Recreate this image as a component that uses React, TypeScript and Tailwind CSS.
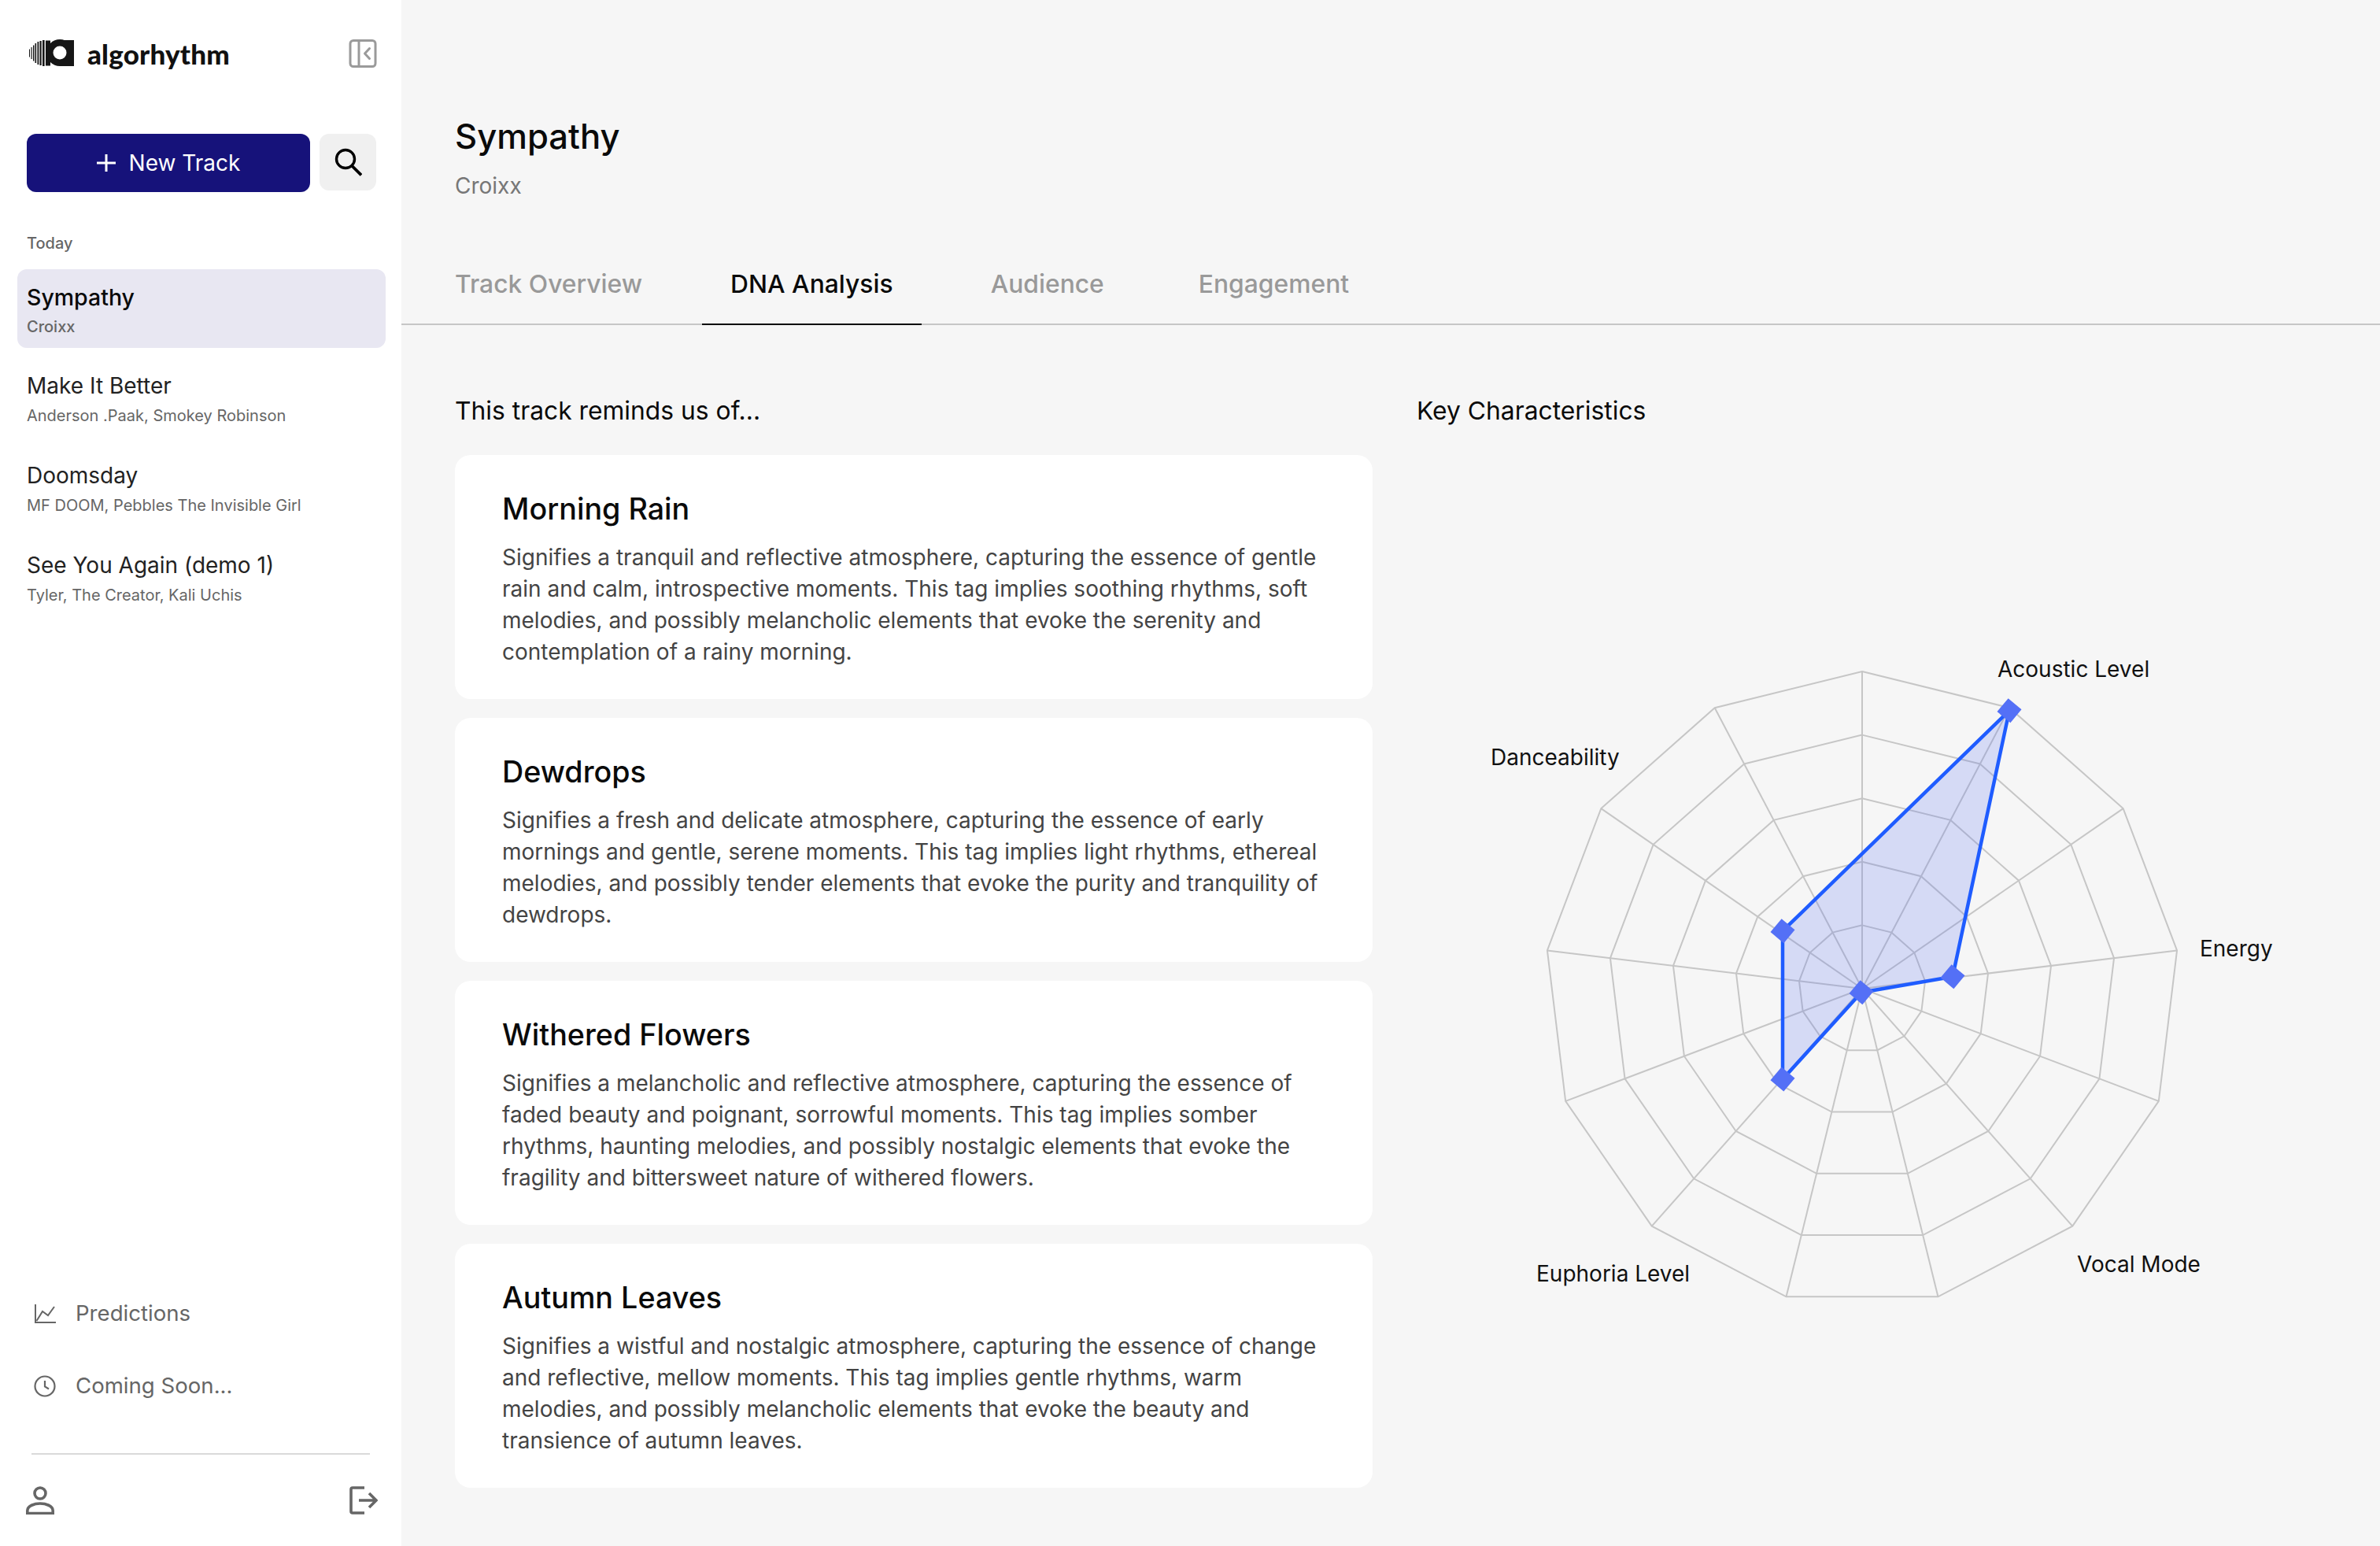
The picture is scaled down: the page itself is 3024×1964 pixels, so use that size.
const TRACKS = [
  { title: "Sympathy", artist: "Croixx", active: true },
  { title: "Make It Better", artist: "Anderson .Paak, Smokey Robinson" },
  { title: "Doomsday", artist: "MF DOOM, Pebbles The Invisible Girl" },
  { title: "See You Again (demo 1)", artist: "Tyler, The Creator, Kali Uchis" },
];

const TAGS = [
  {
    title: "Morning Rain",
    lines: [
      "Signifies a tranquil and reflective atmosphere, capturing the essence of gentle",
      "rain and calm, introspective moments. This tag implies soothing rhythms, soft",
      "melodies, and possibly melancholic elements that evoke the serenity and",
      "contemplation of a rainy morning.",
    ],
  },
  {
    title: "Dewdrops",
    lines: [
      "Signifies a fresh and delicate atmosphere, capturing the essence of early",
      "mornings and gentle, serene moments. This tag implies light rhythms, ethereal",
      "melodies, and possibly tender elements that evoke the purity and tranquility of",
      "dewdrops.",
    ],
  },
  {
    title: "Withered Flowers",
    lines: [
      "Signifies a melancholic and reflective atmosphere, capturing the essence of",
      "faded beauty and poignant, sorrowful moments. This tag implies somber",
      "rhythms, haunting melodies, and possibly nostalgic elements that evoke the",
      "fragility and bittersweet nature of withered flowers.",
    ],
  },
  {
    title: "Autumn Leaves",
    lines: [
      "Signifies a wistful and nostalgic atmosphere, capturing the essence of change",
      "and reflective, mellow moments. This tag implies gentle rhythms, warm",
      "melodies, and possibly melancholic elements that evoke the beauty and",
      "transience of autumn leaves.",
    ],
  },
];

const AXES = 13;
const RINGS = 5;
const RADIUS = 403;
const CX = 566;
const CY = 498;

function vertex(i: number, r: number) {
  const a = (i * 2 * Math.PI) / AXES;
  return [CX + r * Math.sin(a), CY - r * Math.cos(a)];
}

// measured from centre of the chart
const SERIES = [
  [187, -353.3],
  [115, -15.3],
  [-1, 4.7],
  [-101, 115],
  [-101, -73.3],
].map(([x, y]) => [CX + x, CY + y]);

function RadarChart() {
  const dataPoints = SERIES.map((p) => p.join(",")).join(" ");
  return (
    <svg width="1224" height="960" className="block" style={{ fontFamily: "Inter, sans-serif" }}>
      {Array.from({ length: RINGS }).map((_, ring) => (
        <polygon
          key={ring}
          points={Array.from({ length: AXES })
            .map((_, i) => vertex(i, (RADIUS * (ring + 1)) / RINGS).join(","))
            .join(" ")}
          fill="none"
          stroke="#c6c6c6"
          strokeWidth="2"
        />
      ))}
      {Array.from({ length: AXES }).map((_, i) => {
        const [x, y] = vertex(i, RADIUS);
        return <line key={i} x1={CX} y1={CY} x2={x} y2={y} stroke="#c6c6c6" strokeWidth="2" />;
      })}
      <polygon points={dataPoints} fill="#5470f6" fillOpacity="0.2" stroke="none" />
      <polygon points={dataPoints} fill="none" stroke="#1f5cff" strokeWidth="4.5" strokeLinejoin="round" />
      {SERIES.map(([x, y], i) => (
        <rect key={i} x={x - 11} y={y - 11} width="22" height="22" fill="#5470f6" transform={`rotate(40 ${x} ${y})`} />
      ))}
      <g fontSize="28" fill="#111111">
        <text x="738" y="102">Acoustic Level</text>
        <text x="995" y="457">Energy</text>
        <text x="839" y="858">Vocal Mode</text>
        <text x="152" y="870">Euphoria Level</text>
        <text x="94" y="214">Danceability</text>
      </g>
    </svg>
  );
}

function Logo() {
  const bars = [
    [0, 1, 10],
    [2.5, 1.2, 15],
    [5, 1.4, 20],
    [7.5, 1.6, 25],
    [10.5, 1.8, 29],
    [13.5, 2.2, 31],
    [17, 2.6, 33],
  ];
  return (
    <svg width="58" height="36" viewBox="0 0 58 36" className="shrink-0">
      <g fill="#161616">
        {bars.map(([x, w, h]) => (
          <rect key={x} x={x} y={17.5 - h / 2} width={w} height={h} />
        ))}
        <rect x="21" y="1.5" width="6" height="32" />
        <circle cx="39" cy="17" r="17" />
        <rect x="39" y="1" width="18" height="33" />
      </g>
      <circle cx="39" cy="17" r="8.5" fill="#ffffff" />
    </svg>
  );
}

function Sidebar() {
  return (
    <aside className="flex h-full w-[510px] shrink-0 flex-col bg-white">
      <div className="flex h-[136px] items-start justify-between pl-[37px] pr-[31px] pt-[50px]">
        <div className="flex items-center gap-[16px]">
          <Logo />
          <span className="font-['Lato',sans-serif] text-[35px] leading-[36px] font-black tracking-[0.2px] text-[#111111]">
            algorhythm
          </span>
        </div>
        <svg width="36" height="36" viewBox="0 0 36 36" fill="none" stroke="#9a9a9a" strokeWidth="3">
          <rect x="2" y="1.5" width="32" height="33" rx="4" />
          <path d="M13 2v32" />
          <path d="M26.5 11.5 20.5 18l6 6.5" strokeLinecap="round" strokeLinejoin="round" />
        </svg>
      </div>
      <div className="mt-[34px] flex items-start gap-[12px] pl-[34px] pr-[32px]">
        <button className="flex h-[74px] w-[360px] items-center justify-center gap-[17px] rounded-[12px] bg-[#16127a] text-[28px] text-white">
          <svg width="24" height="24" viewBox="0 0 24 24" stroke="#ffffff" strokeWidth="3">
            <path d="M12 1v22M0 12h24" />
          </svg>
          New Track
        </button>
        <button className="flex h-[72px] w-[72px] items-center justify-center rounded-[12px] bg-[#f0f0f0]">
          <svg width="36" height="36" viewBox="0 0 36 36" fill="none" stroke="#000000" strokeWidth="3.4">
            <circle cx="15" cy="14" r="11.5" />
            <path d="M23 22.5 35 34.5" strokeWidth="3.8" />
          </svg>
        </button>
      </div>
      <p className="mt-[53px] pl-[34px] text-[20px] leading-[24px] font-medium text-[#666666]">Today</p>
      <div className="mt-[21px] flex flex-col gap-[14px] pl-[22px] pr-[20px]">
        {TRACKS.map((t) => (
          <div key={t.title} className={`h-[100px] rounded-[12px] px-[12px] ${t.active ? "bg-[#e8e7f2] pt-[18px]" : "pt-[16px]"}`}>
            <p className={`leading-[36px] ${t.active ? "text-[28.5px] font-medium text-[#0a0a0a]" : "text-[28px] text-[#222222]"}`}>{t.title}</p>
            <p className={`text-[20px] leading-[24px] text-[#666666] ${t.active ? "mt-[7px] font-medium" : "mt-[8px]"}`}>{t.artist}</p>
          </div>
        ))}
      </div>
      <div className="mt-auto pb-[40px]">
        <div className="flex h-[92px] items-center gap-[25px] pl-[43px] text-[27.6px] text-[#666666]">
          <svg width="28" height="26" viewBox="0 0 28 26" fill="none" stroke="#666666" strokeWidth="2">
            <path d="M2 1v23h26" />
            <path d="M3.5 22 11 10l7 5 8-11" />
          </svg>
          Predictions
        </div>
        <div className="flex h-[92px] items-center gap-[25px] pl-[43px] text-[27.6px] text-[#666666]">
          <svg width="28" height="28" viewBox="0 0 28 28" fill="none" stroke="#666666" strokeWidth="2.2">
            <circle cx="14" cy="14" r="12.5" />
            <path d="M14 7v7.5l5 3" />
          </svg>
          Coming Soon...
        </div>
        <div className="mx-[40px] mt-[39px] h-[2px] bg-[#d9d9d9]" />
        <div className="mt-[40px] flex items-center justify-between pl-[33px] pr-[30px]">
          <svg width="36" height="36" viewBox="0 0 36 36" fill="none" stroke="#666666" strokeWidth="3.6">
            <circle cx="18" cy="9" r="7" />
            <path d="M1.8 34.5v-3.5c0-6 9-9 16.2-9s16.2 3 16.2 9v3.5z" />
          </svg>
          <svg width="36" height="36" viewBox="0 0 36 36" fill="none" stroke="#666666" strokeWidth="3.6">
            <path d="M19 2H4a2 2 0 0 0-2 2v28a2 2 0 0 0 2 2h15" />
            <path d="M12 18h22M25 9l9 9-9 9" />
          </svg>
        </div>
      </div>
    </aside>
  );
}

export default function App() {
  return (
    <div className="flex h-[1964px] w-[3024px] overflow-hidden bg-[#f6f6f6] font-['Inter',sans-serif]">
      <Sidebar />
      <main className="flex min-w-0 flex-1 flex-col">
        <header className="px-[68px] pt-[145px]">
          <h1 className="text-[43.6px] leading-[58px] font-medium text-[#0a0a0a]">Sympathy</h1>
          <p className="mt-[15px] text-[28px] leading-[36px] text-[#777777]">Croixx</p>
        </header>
        <nav className="mt-[74px] flex h-[85px] items-start border-b-2 border-[#c6c6c6] pl-[68px] text-[31.8px] leading-[40px] font-medium">
          <div className="mr-[40px] h-[85px] pr-[36px] pt-[13px] text-[#999999]">Track Overview</div>
          <div className="mr-[52px] h-[85px] border-b-2 border-[#000000] px-[36px] pt-[13px] text-[#0a0a0a]">DNA Analysis</div>
          <div className="mr-[48px] h-[85px] px-[36px] pt-[13px] text-[#999999]">Audience</div>
          <div className="h-[85px] px-[36px] pt-[13px] text-[#999999]">Engagement</div>
        </nav>
        <div className="flex gap-[56px] pl-[68px] pt-[89px]">
          <section className="w-[1166px] shrink-0">
            <h2 className="text-[31.8px] leading-[40px] text-[#0a0a0a]">This track reminds us of...</h2>
            <div className="mt-[36px] flex flex-col gap-[24px]">
              {TAGS.map((tag) => (
                <article key={tag.title} className="h-[310px] rounded-[20px] bg-white pl-[60px] pt-[45px]">
                  <h3 className="text-[37.7px] leading-[46px] font-medium text-[#0a0a0a]">{tag.title}</h3>
                  <p className="mt-[19px] text-[28px] leading-[40px] text-[#444444]">
                    {tag.lines.map((line) => (
                      <span key={line} className="block whitespace-nowrap">{line}</span>
                    ))}
                  </p>
                </article>
              ))}
            </div>
          </section>
          <section className="min-w-0 flex-1">
            <h2 className="text-[31.8px] leading-[40px] text-[#0a0a0a]">Key Characteristics</h2>
            <div className="mt-[216px]">
              <RadarChart />
            </div>
          </section>
        </div>
      </main>
    </div>
  );
}
